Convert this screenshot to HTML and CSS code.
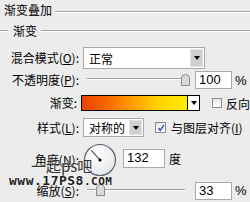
FILE: index.html
```html
<!DOCTYPE html>
<html lang="zh">
<head>
<meta charset="utf-8">
<link rel="stylesheet" href="styles.css">
</head>
<body>
<div class="panel">
  <div class="legend title"><span>渐变叠加</span><i class="rule"></i></div>
  <div class="legend group"><i class="rule short"></i><span>渐变</span><i class="rule"></i></div>

  <div class="row r-blend">
    <label class="lbl">混合模式(<u>O</u>):</label>
    <div class="select blend"><span class="val">正常</span><b class="drop"><i class="tri"></i></b></div>
  </div>

  <div class="row r-opacity">
    <label class="lbl">不透明度(<u>P</u>):</label>
    <div class="slider"><i class="track"></i><svg class="thumb t100" viewBox="0 0 9 12" width="9" height="12"><path d="M0.5 11.5 V4 Q0.5 0.5 4.5 0.5 Q8.5 0.5 8.5 4 V11.5 Z" fill="#d9d9d9" stroke="#8a8a8a"/></svg></div>
    <div class="num">100</div><span class="unit">%</span>
  </div>

  <div class="row r-grad">
    <label class="lbl">渐变:</label>
    <div class="grad"><span class="ramp"></span><b class="gdrop"><i class="tri"></i></b></div>
    <span class="check"></span><span class="ctext">反向</span>
  </div>

  <div class="row r-style">
    <label class="lbl">样式(<u>L</u>):</label>
    <div class="select style"><span class="val">对称的</span><b class="drop"><i class="tri"></i></b></div>
    <span class="check checked"><svg viewBox="0 0 10 10" width="10" height="10"><path d="M2 5 L4 8 L8.5 1.5" fill="none" stroke="#2b4fb3" stroke-width="1.8"/></svg></span><span class="ctext">与图层对齐(<u>I</u>)</span>
  </div>

  <div class="row r-angle">
    <label class="lbl">角度(<u>N</u>):</label>
    <svg class="dial" viewBox="0 0 34 34" width="34" height="34">
      <defs><radialGradient id="dg" cx="40%" cy="35%" r="70%"><stop offset="0" stop-color="#ffffff"/><stop offset="1" stop-color="#e4e6ea"/></radialGradient></defs>
      <circle cx="17" cy="17" r="15.5" fill="url(#dg)" stroke="#5b626d" stroke-width="1.2"/>
      <line x1="17" y1="17" x2="8.3" y2="7.4" stroke="#000" stroke-width="1"/>
      <circle cx="17" cy="17" r="1.6" fill="#000"/>
    </svg>
    <div class="num angle">132</div><span class="unit deg">度</span>
  </div>

  <div class="row r-scale">
    <label class="lbl">缩放(<u>S</u>):</label>
    <div class="slider"><i class="track"></i><svg class="thumb t33" viewBox="0 0 9 12" width="9" height="12"><path d="M0.5 11.5 V4 Q0.5 0.5 4.5 0.5 Q8.5 0.5 8.5 4 V11.5 Z" fill="#d9d9d9" stroke="#8a8a8a"/></svg></div>
    <div class="num">33</div><span class="unit">%</span>
  </div>
</div>

<div class="watermark">
  <div class="wm1">一起ps吧</div>
  <div class="wm2">www.17PS8<small>.COM</small></div>
</div>
</body>
</html>
```

FILE: styles.css
```css
* { box-sizing: border-box; }
html, body { margin: 0; padding: 0; }
body {
  width: 250px;
  height: 202px;
  overflow: hidden;
  background: #ececec;
  font-family: "Noto Sans CJK SC", "Noto Sans", sans-serif;
  font-size: 12px;
  color: #000;
  position: relative;
}
u { text-decoration: underline; text-underline-offset: 1px; }

.panel { display: flex; flex-direction: column; }

.legend { display: flex; align-items: center; height: 20px; }
.legend span { line-height: 16px; white-space: nowrap; }
.legend .rule {
  flex: 1;
  height: 2px;
  border-top: 1px solid #a3a3a3;
  border-bottom: 1px solid #ffffff;
}
.title { padding-left: 4px; }
.title .rule { margin-left: 3px; margin-top: 3px; }
.group { margin-top: 1px; }
.group .rule.short { flex: 0 0 8px; }
.group span { margin: 0 4px 0 5px; }

.row { display: flex; align-items: center; }
.lbl { width: 79px; text-align: right; margin-right: 4px; white-space: nowrap; line-height: 14px; }

.r-blend { margin-top: 6px; height: 22px; }
.r-opacity { margin-top: 1px; height: 20px; }
.r-grad { margin-top: 5px; height: 16px; }
.r-style { margin-top: 7px; height: 19px; }
.r-angle { margin-top: 6px; height: 34px; }
.r-scale { margin-top: 4px; height: 19px; }

.select {
  display: flex;
  align-items: stretch;
  height: 100%;
  background: #fff;
  border: 1px solid #a9a9a9;
}
.select .val { flex: 1; display: flex; align-items: center; padding-left: 5px; }
.select.blend { width: 122px; }
.select.style { width: 61px; }
.drop {
  width: 13px;
  margin: 1px;
  background: #cfcfcf;
  border: 1px solid #e2e2e2;
  display: flex;
  align-items: center;
  justify-content: center;
}
.tri {
  width: 0; height: 0;
  border-left: 3.5px solid transparent;
  border-right: 3.5px solid transparent;
  border-top: 4px solid #000;
}

.slider { position: relative; width: 108px; height: 100%; }
.track {
  position: absolute;
  left: 4px; right: 6px; top: 8px;
  height: 2px;
  border-top: 1px solid #9e9e9e;
  border-bottom: 1px solid #ffffff;
}
.thumb { position: absolute; top: 4px; }
.t100 { left: 98px; }
.t33 { left: 13px; top: 3px; }

.num {
  width: 37px;
  height: 18px;
  margin-left: 4px;
  background: #fff;
  border: 1px solid #a9a9a9;
  font-family: "Liberation Sans", Arial, sans-serif;
  font-size: 13px;
  line-height: 16px;
  padding-left: 3px;
}
.unit { margin-left: 3px; font-family: "Liberation Sans", Arial, sans-serif; font-size: 13px; }
.unit.deg { font-family: "Noto Sans CJK SC", sans-serif; font-size: 12px; margin-left: 4px; }
.num.angle { width: 42px; height: 19px; margin-left: 6px; margin-top: -3px; }
.r-angle .deg { margin-top: -3px; }

.grad {
  display: flex;
  width: 122px;
  height: 16px;
  border: 1px solid #000;
  background: #fff;
}
.ramp {
  flex: 1;
  background: linear-gradient(to right, #ea4300 0%, #f96a00 25%, #ffa000 50%, #ffd200 72%, #ffec00 100%);
  border-right: 1px solid #000;
}
.gdrop { width: 11px; display: flex; align-items: center; justify-content: center; }

.check {
  width: 10px;
  height: 10px;
  margin-left: 12px;
  border: 1px solid #8d8d8d;
  background: linear-gradient(#e8e8e8, #ffffff);
  display: inline-flex;
  align-items: center;
  justify-content: center;
}
.check svg { width: 8px; height: 8px; }
.r-style .check { margin-left: 11px; width: 11px; height: 11px; }
.ctext { margin-left: 4px; white-space: nowrap; }
.r-style .ctext { margin-left: 5px; }

.dial { display: block; margin-top: 0; }

.watermark {
  position: absolute;
  left: 9px;
  top: 157px;
  color: #2a2a2a;
  pointer-events: none;
}
.wm1 {
  margin-left: 22px;
  font-size: 15px;
  line-height: 18px;
  color: #333;
  text-shadow: 0 0 2px #fff;
}
.wm2 {
  font-family: "DejaVu Sans Mono", monospace;
  font-weight: bold;
  font-size: 13px;
  line-height: 12px;
  letter-spacing: 0.5px;
  color: #1e1e1e;
  text-shadow: 0 0 2px #fff;
}
.wm2 small { font-size: 11px; }
```
